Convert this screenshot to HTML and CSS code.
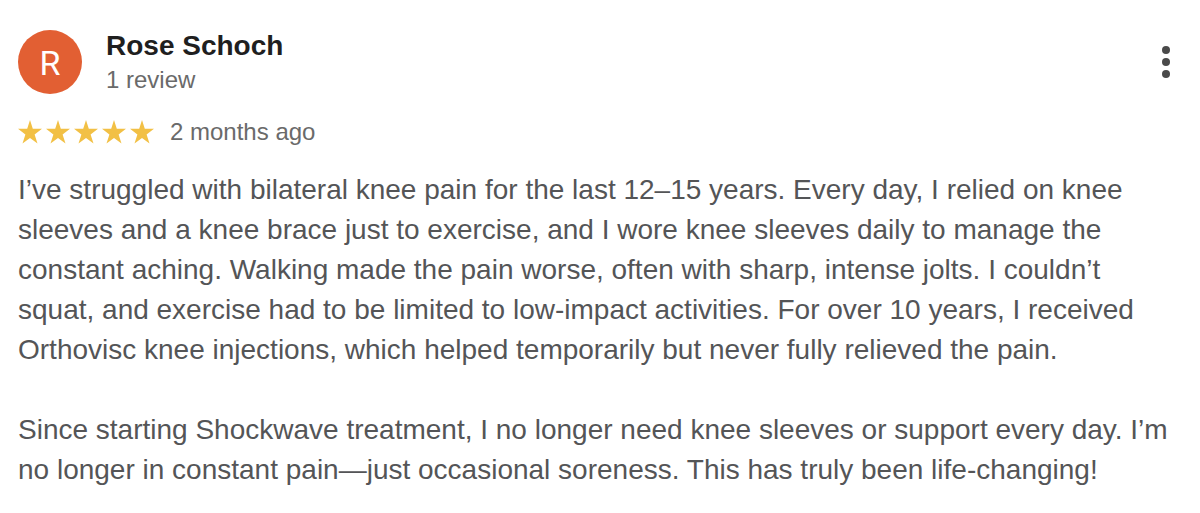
FILE: index.html
```html
<!DOCTYPE html>
<html lang="en">
<head>
    <meta charset="UTF-8">
    <meta name="viewport" content="width=device-width, initial-scale=1.0">
    <title>Rose Schoch - Review</title>
    <link rel="stylesheet" href="styles.css">
</head>
<body>
    <article class="review">
        <header class="review-header">
            <div class="avatar">R</div>
            <div class="author">
                <h1 class="author-name">Rose Schoch</h1>
                <p class="author-info">1 review</p>
            </div>
            <button class="menu-btn" type="button" aria-label="More options">
                <svg width="8" height="32" viewBox="0 0 8 32">
                    <circle cx="4" cy="4" r="4"/>
                    <circle cx="4" cy="16" r="4"/>
                    <circle cx="4" cy="28" r="4"/>
                </svg>
            </button>
        </header>

        <div class="rating">
            <svg class="stars" width="136" height="24" viewBox="0 0 136 24" role="img" aria-label="5 out of 5 stars">
                <defs>
                    <path id="star" d="M12 0l2.8 8.7 9.2.1-7.4 5.6 2.9 9L12 18l-7.5 5.4 2.9-9L0 8.8l9.2-.1z"/>
                </defs>
                <use href="#star" x="0"/>
                <use href="#star" x="28"/>
                <use href="#star" x="56"/>
                <use href="#star" x="84"/>
                <use href="#star" x="112"/>
            </svg>
            <span class="date">2 months ago</span>
        </div>

        <div class="review-text">
            <p>I’ve struggled with bilateral knee pain for the last 12–15 years. Every day, I relied on knee sleeves and a knee brace just to exercise, and I wore knee sleeves daily to manage the constant aching. Walking made the pain worse, often with sharp, intense jolts. I couldn’t squat, and exercise had to be limited to low-impact activities. For over 10 years, I received Orthovisc knee injections, which helped temporarily but never fully relieved the pain.</p>
            <p>Since starting Shockwave treatment, I no longer need knee sleeves or support every day. I’m no longer in constant pain—just occasional soreness. This has truly been life-changing!</p>
        </div>
    </article>
</body>
</html>
```

FILE: styles.css
```css
body {
    margin: 0;
    background-color: #fff;
    color: #545557;
    font-family: "Liberation Sans", Arial, sans-serif;
}
h1, p {
    margin: 0;
}
.review {
    padding: 28px 18px 22px;
}
.review-header {
    display: flex;
    align-items: center;
}
.avatar {
    width: 64px;
    height: 64px;
    border-radius: 50%;
    background-color: #e25f33;
    color: #fff;
    font-family: Roboto, sans-serif;
    font-size: 34px;
    line-height: 66px;
    text-align: center;
}
.author {
    flex: 1;
    margin-left: 24px;
}
.author-name {
    color: #1f1f1f;
    font-size: 28px;
    line-height: 36px;
}
.author-info {
    color: #6a6a6a;
    font-size: 24px;
    line-height: 32px;
}
.menu-btn {
    padding: 4px 12px;
    border: none;
    background: none;
    fill: #4a4a4a;
    cursor: pointer;
}
.menu-btn svg {
    display: block;
}
.rating {
    display: flex;
    align-items: center;
    gap: 16px;
    margin-top: 20px;
}
.stars {
    fill: #f2c045;
}
.date {
    color: #6a6a6a;
    font-size: 24px;
    line-height: 32px;
}
.review-text {
    margin-top: 22px;
    font-size: 28px;
    line-height: 40px;
}
.review-text p + p {
    margin-top: 40px;
}
```
